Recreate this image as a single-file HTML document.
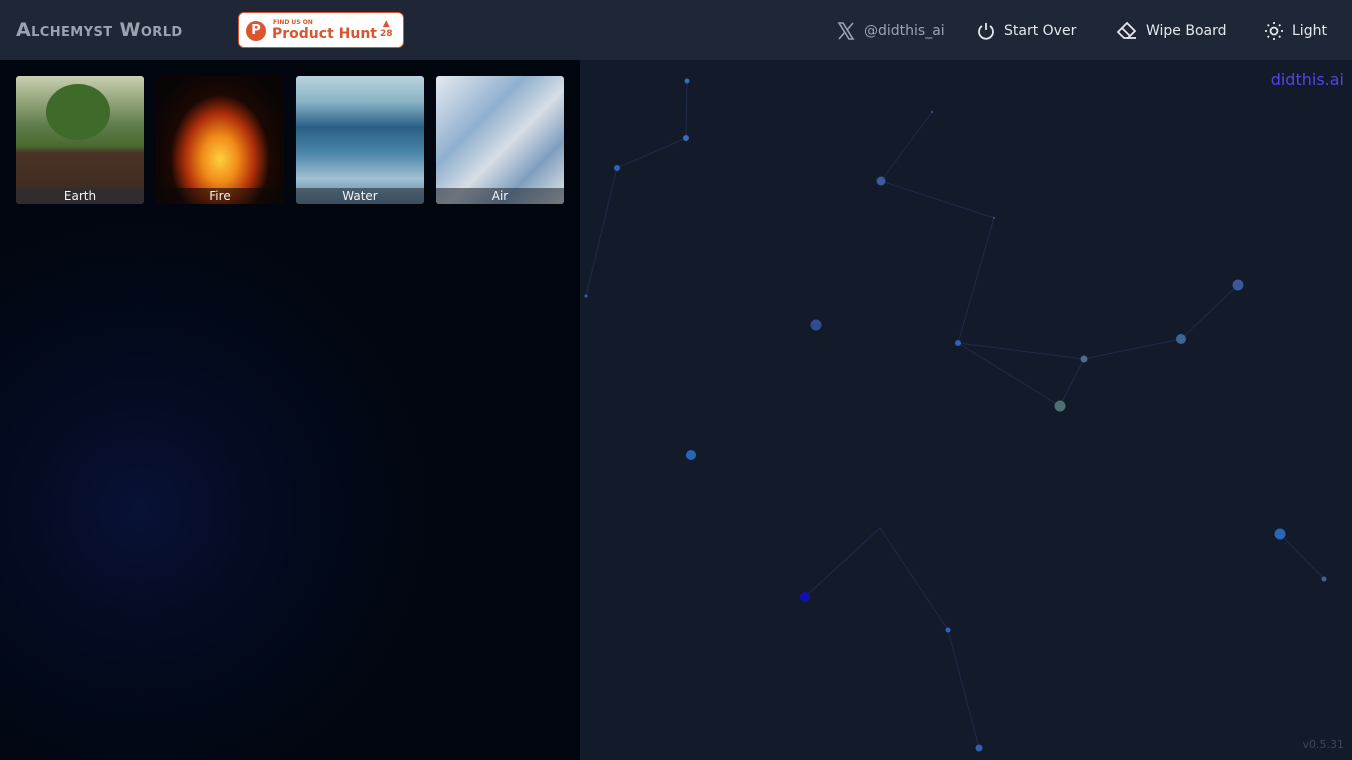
<!DOCTYPE html>
<html><head><meta charset="utf-8"><style>
*{margin:0;padding:0;box-sizing:border-box}
body{width:1352px;height:760px;overflow:hidden;background:#131a2a;font-family:"DejaVu Sans","Liberation Sans",sans-serif;position:relative}
.hdr{position:absolute;left:0;top:0;width:1352px;height:60px;background:#1f2737}
.logo{position:absolute;left:16px;top:19px;color:#9ca3af;font-weight:bold;font-size:19px;font-variant:small-caps;letter-spacing:0.4px}
.ph{position:absolute;left:238px;top:12px;width:166px;height:36px;background:#fff;border:1px solid #da552f;border-radius:6px}
.ph .c{position:absolute;left:7px;top:8px;width:20px;height:20px;border-radius:50%;background:#da552f;color:#fff;font-weight:bold;font-size:13px;text-align:center;line-height:20px}
.ph .s{position:absolute;left:34px;top:6px;font-size:6px;font-weight:bold;color:#da552f}
.ph .b{position:absolute;left:33px;top:13px;font-size:14px;font-weight:bold;color:#da552f}
.ph .n{position:absolute;left:141px;top:6px;font-size:9px;color:#da552f;text-align:center;line-height:10px;font-weight:bold}
.nav{position:absolute;top:21px;font-size:14px;color:#e5e7eb;display:flex;align-items:center;gap:8px}
.left{position:absolute;left:0;top:60px;width:580px;height:700px;background:radial-gradient(circle at 140px 450px,#081236 0,#050d28 80px,#020816 220px,#02060f 320px)}
.tile{position:absolute;top:16px;width:128px;height:128px;border-radius:3px;overflow:hidden}
.tile span{position:absolute;left:0;bottom:0;width:100%;height:16px;background:rgba(40,45,55,.6);color:#f3f4f6;font-size:12px;text-align:center;line-height:16px}
</style></head><body>
<div class="hdr">
<div class="logo">Alchemyst World</div>
<div class="ph"><div class="c">P</div><div class="s">FIND US ON</div><div class="b">Product Hunt</div><div class="n">▲<br>28</div></div>
<div class="nav" style="left:836px;color:#9ca3af"><svg width="20" height="20" viewBox="0 0 20 20"><path d="M3 2h4l10 16h-4z M3 18L9 11 M11 9L17 2" stroke="#9ca3af" stroke-width="1.6" fill="none"/></svg>@didthis_ai</div>
<div class="nav" style="left:976px"><svg width="20" height="20" viewBox="0 0 20 20" fill="none" stroke="#e5e7eb" stroke-width="1.8"><path d="M10 2v7"/><path d="M6 5a7 7 0 1 0 8 0"/></svg>Start Over</div>
<div class="nav" style="left:1116px"><svg width="22" height="20" viewBox="0 0 22 20" fill="none" stroke="#e5e7eb" stroke-width="1.8"><path d="M2 11l9-9 8 8-7 7H8z"/><path d="M6 7l8 8"/><path d="M11 17h9"/></svg>Wipe Board</div>
<div class="nav" style="left:1264px"><svg width="20" height="20" viewBox="0 0 20 20" fill="none" stroke="#e5e7eb" stroke-width="1.8"><circle cx="10" cy="10" r="3.5"/><path d="M10 1v2M10 17v2M1 10h2M17 10h2M3.6 3.6l1.4 1.4M15 15l1.4 1.4M3.6 16.4L5 15M15 5l1.4-1.4"/></svg>Light</div>
</div>
<div class="left">
<div class="tile" style="left:16px;background:linear-gradient(180deg,#c8cfb0 0,#5d7a48 40%,#4a6a30 55%,#4b3226 60%,#3a2a20 100%)"><div style="position:absolute;left:30px;top:8px;width:64px;height:56px;border-radius:50%;background:#3e6a2a"></div><span>Earth</span></div>
<div class="tile" style="left:156px;background:radial-gradient(ellipse at 50% 65%,#ffcf40 0,#f08a18 20%,#b0300a 38%,#1a0804 55%,#0a0505 80%)"><span style="background:rgba(10,8,8,.6)">Fire</span></div>
<div class="tile" style="left:296px;background:linear-gradient(180deg,#b9d3dc 0,#8ab4c6 20%,#2b5f86 40%,#4b85a8 60%,#9fc1d2 80%,#547e98 100%)"><span>Water</span></div>
<div class="tile" style="left:436px;background:linear-gradient(135deg,#e5e9ef 0,#8fb0cf 35%,#d7dde5 55%,#7f9fbf 75%,#e8e8e8 100%)"><span>Air</span></div>
</div>
<svg style="position:absolute;left:580px;top:60px" width="772" height="700">
<g stroke="#1f2b48" stroke-width="1" fill="none">
<path d="M107 21L106 78L37 108L6 236"/><path d="M352 52L301 121L414 158L378 283L480 346L504 299L601 279L658 225"/><path d="M378 283L504 299"/><path d="M300 468L225 537"/><path d="M300 468L368 570L399 688"/><path d="M700 474L744 519"/>
</g>
<g>
<circle cx="107" cy="21" r="2.5" fill="#3b6bb8"/><circle cx="106" cy="78" r="3" fill="#3b6bb8"/><circle cx="37" cy="108" r="3" fill="#2f62c0"/><circle cx="6" cy="236" r="1.5" fill="#2f62c0"/>
<circle cx="301" cy="121" r="4.5" fill="#3d5a9a"/><circle cx="352" cy="52" r="1" fill="#3d5a9a"/><circle cx="414" cy="158" r="1" fill="#3d5a9a"/>
<circle cx="236" cy="265" r="5.5" fill="#2e4c8e"/><circle cx="378" cy="283" r="3" fill="#2d63c0"/><circle cx="504" cy="299" r="3.5" fill="#4a6a8e"/><circle cx="480" cy="346" r="5.5" fill="#4a7272"/><circle cx="601" cy="279" r="5" fill="#3d6592"/><circle cx="658" cy="225" r="5.5" fill="#3a5898"/>
<circle cx="111" cy="395" r="5" fill="#2a66b8"/><circle cx="225" cy="537" r="5" fill="#1010b0"/><circle cx="368" cy="570" r="2.5" fill="#2d63c0"/><circle cx="399" cy="688" r="3.5" fill="#3060b0"/>
<circle cx="700" cy="474" r="5.5" fill="#2a66b8"/><circle cx="744" cy="519" r="2.5" fill="#3d6592"/>
</g>
<text x="764" y="25" text-anchor="end" font-family="DejaVu Sans,sans-serif" font-size="16" fill="#4f46e5">didthis.ai</text>
<text x="764" y="688" text-anchor="end" font-family="DejaVu Sans,sans-serif" font-size="11" fill="#3f4656">v0.5.31</text>
</svg>
</body></html>
